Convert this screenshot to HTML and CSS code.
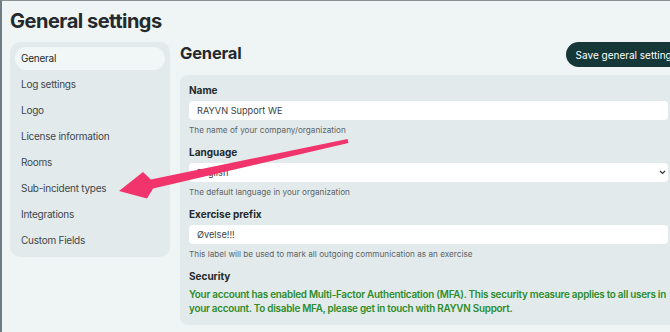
FILE: index.html
```html
<!DOCTYPE html>
<html>
<head>
<meta charset="utf-8">
<link rel="stylesheet" href="styles.css">
</head>
<body>
<div class="frame">
  <h1 class="title">General settings</h1>
  <div class="layout">
    <nav class="sidebar">
      <div class="nav-item active">General</div>
      <div class="nav-item">Log settings</div>
      <div class="nav-item">Logo</div>
      <div class="nav-item">License information</div>
      <div class="nav-item">Rooms</div>
      <div class="nav-item">Sub-incident types</div>
      <div class="nav-item">Integrations</div>
      <div class="nav-item">Custom Fields</div>
    </nav>
    <main class="main">
      <div class="main-head">
        <h2 class="heading">General</h2>
        <button class="save">Save general settings</button>
      </div>
      <section class="panel">
        <div class="field">
          <div class="label">Name</div>
          <div class="input">RAYVN Support WE</div>
          <div class="help">The name of your company/organization</div>
        </div>
        <div class="field">
          <div class="label">Language</div>
          <div class="input select"><span>English</span>
            <svg class="chev" width="7" height="5" viewBox="0 0 7 5"><path d="M1 1l2.5 2.5 2.5-2.5" fill="none" stroke="#333" stroke-width="1.2"/></svg>
          </div>
          <div class="help">The default language in your organization</div>
        </div>
        <div class="field">
          <div class="label">Exercise prefix</div>
          <div class="input">Øvelse!!!</div>
          <div class="help">This label will be used to mark all outgoing communication as an exercise</div>
        </div>
        <div class="field last">
          <div class="label">Security</div>
          <p class="mfa">Your account has enabled Multi-Factor Authentication (MFA). This security measure applies to all users in your account. To disable MFA, please get in touch with RAYVN Support.</p>
        </div>
      </section>
    </main>
  </div>
</div>
<svg class="arrow" width="670" height="332" viewBox="0 0 670 332">
  <polygon points="347.6,139 150.9,179.5 143,172 119,191 147,198.5 153.1,188.5 348.4,143" fill="#f2346c"/>
</svg>
</body>
</html>
```
FILE: styles.css
```css
html, body {
  margin: 0;
  padding: 0;
  overflow: hidden;
  width: 670px;
  height: 332px;
  background: #eff5f5;
}
body {
  font-family: Inter, "Noto Sans", sans-serif;
  color: #23292c;
  position: relative;
}
.frame {
  box-sizing: border-box;
  height: 332px;
  border-left: 2px solid #6f7c84;
  border-top: 1px solid #8a8f94;
  padding: 0 0 0 8px;
  width: 700px;
}
.title {
  margin: 0;
  font-size: 20px;
  font-weight: 700;
  line-height: 40px;
  height: 41px;
  letter-spacing: -0.5px;
}
.layout {
  display: flex;
  gap: 10px;
  align-items: flex-start;
}
.sidebar {
  width: 160px;
  box-sizing: border-box;
  background: #e2eaeb;
  border-radius: 10px;
  padding: 5px;
  display: flex;
  flex-direction: column;
  gap: 3px;
}
.nav-item {
  height: 23px;
  line-height: 23px;
  padding-left: 6px;
  font-size: 10px;
  letter-spacing: -0.25px;
  color: #3f474b;
  border-radius: 12px;
}
.nav-item.active {
  background: #f1f6f6;
  color: #23292c;
}
.main {
  width: 497px;
  flex-shrink: 0;
}
.main-head {
  display: flex;
  justify-content: space-between;
  align-items: center;
  height: 25px;
  margin-bottom: 8px;
}
.heading {
  margin: 0;
  font-size: 16.5px;
  font-weight: 700;
  letter-spacing: -0.2px;
  position: relative;
  top: -2px;
}
.save {
  background: #153737;
  color: #fff;
  border: none;
  border-radius: 13px;
  height: 25px;
  padding: 0 10px;
  font-family: Inter, "Noto Sans", sans-serif;
  font-size: 10px;
  margin-right: -10px;
}
.panel {
  background: #e2eaeb;
  border-radius: 8px;
  padding: 8px 9px 10px 9px;
}
.field {
  margin-bottom: 8px;
}
.field.last {
  margin-bottom: 0;
}
.label {
  font-size: 10px;
  font-weight: 700;
  line-height: 14px;
  margin-bottom: 4px;
}
.input {
  background: #fff;
  height: 19px;
  line-height: 19px;
  border-radius: 4px;
  padding-left: 8px;
  font-size: 9.2px;
  color: #3a3f42;
  display: flex;
  align-items: center;
}
.select span {
  flex: 1;
}
.chev {
  margin-right: 2px;
}
.help {
  margin-top: 4px;
  font-size: 8.2px;
  line-height: 13px;
  color: #5d6468;
}
.mfa {
  margin: 4px 0 0 0;
  color: #2c8c2c;
  font-weight: 600;
  font-size: 9.9px;
  letter-spacing: -0.25px;
  line-height: 14px;
}
.arrow {
  position: absolute;
  left: 0;
  top: 0;
  pointer-events: none;
}
```
